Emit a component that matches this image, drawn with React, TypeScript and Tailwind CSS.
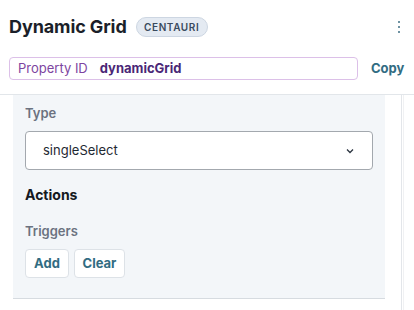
import React from "react";

export default function App() {
  return (
    <div
      className="w-[414px] h-[310px] bg-white overflow-hidden flex flex-col"
      style={{ fontFamily: "Inter, 'Noto Sans', sans-serif" }}
    >
      {/* header */}
      <div className="flex items-center h-[20px] mt-[17px] pl-[9px] pr-[14px]">
        <span className="text-[18px] leading-[20px] font-bold text-[#1b1f29] tracking-[-0.1px]">Dynamic Grid</span>
        <span className="ml-[9px] h-[20px] w-[72px] rounded-full bg-[#e4eaf2] border border-[#cdd6e2] flex items-center justify-center text-[10px] font-semibold tracking-[0.6px] text-[#3a4a5e]">
          CENTAURI
        </span>
        <div className="ml-auto flex flex-col items-center gap-[2.5px]">
          <span className="w-[2.5px] h-[2.5px] rounded-full bg-[#3f6f84]" />
          <span className="w-[2.5px] h-[2.5px] rounded-full bg-[#3f6f84]" />
          <span className="w-[2.5px] h-[2.5px] rounded-full bg-[#3f6f84]" />
        </div>
      </div>

      {/* property id */}
      <div className="flex items-center mt-[20px] pl-[9px]">
        <div className="w-[349px] h-[23px] border border-[#dcc0e8] rounded-[4px] flex items-center pl-[8px] text-[13px]">
          <span className="text-[#7d45a0]">Property ID</span>
          <span className="ml-[12px] font-bold text-[#4a2776]">dynamicGrid</span>
        </div>
        <span className="ml-[13px] text-[13px] font-bold text-[#316c82]">Copy</span>
      </div>

      {/* body */}
      <div className="mt-[14px] border-t border-[#e2e6ea] flex-1 flex">
        <div className="w-[402px] border-r border-[#e3e6ea] flex-none">
          <div className="ml-[13px] w-[372px] bg-[#f3f6f9] border-b border-[#d6dbe0] px-[12px] pt-[10px] pb-[20px] flex flex-col">
            <span className="text-[13px] leading-[16px] font-semibold text-[#6b7280]">Type</span>
            <div className="mt-[10px] h-[39px] bg-white border border-[#a3a8ae] rounded-[4px] flex items-center pl-[17px] pr-[18px]">
              <span className="text-[13px] text-[#1f2933]">singleSelect</span>
              <svg className="ml-auto" width="8" height="6" viewBox="0 0 8 6" fill="none">
                <path d="M1 1.5 L4 4.5 L7 1.5" stroke="#2b3440" strokeWidth="1.3" />
              </svg>
            </div>
            <span className="mt-[16px] text-[14px] leading-[18px] font-bold text-[#15191f]">Actions</span>
            <span className="mt-[19px] text-[13px] leading-[16px] font-semibold text-[#6b7280]">Triggers</span>
            <div className="mt-[10px] flex gap-[5px]">
              <button className="h-[29px] w-[44px] bg-white border border-[#dde2e7] rounded-[4px] text-[13px] font-bold text-[#316c82]">
                Add
              </button>
              <button className="h-[29px] w-[51px] bg-white border border-[#dde2e7] rounded-[4px] text-[13px] font-bold text-[#316c82]">
                Clear
              </button>
            </div>
          </div>
        </div>
        <div className="ml-[1px] w-[1px] bg-[#f0f1f3]" />
      </div>
    </div>
  );
}
